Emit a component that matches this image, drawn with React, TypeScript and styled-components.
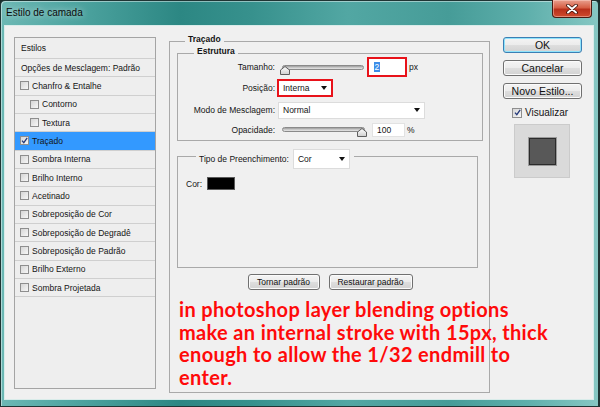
import React from "react";
import styled, { createGlobalStyle } from "styled-components";

const GlobalStyle = createGlobalStyle`
  html, body { margin: 0; padding: 0; }
  body {
    width: 600px;
    height: 407px;
    overflow: hidden;
    background: #1b2b2a;
    font-family: "Liberation Sans", Arial, sans-serif;
    color: #141414;
  }
  * { box-sizing: border-box; }
`;

const Window = styled.div`
  position: relative;
  width: 600px;
  height: 407px;
  display: flex;
  flex-direction: column;
  border: 1px solid #1f3534;
  border-right-width: 2px;
  border-radius: 5px 5px 0 0;
  background: linear-gradient(
    90deg,
    #6cb8b4 0%,
    #4fa5a1 12%,
    #2c8783 30%,
    #37918d 42%,
    #52a7a3 58%,
    #469c98 75%,
    #5eafab 88%,
    #86c7c3 100%
  );
  box-shadow: inset 1px 1px 0 rgba(255, 255, 255, 0.45);
  padding: 0 4px 6px 3px;
`;

const TitleBar = styled.div`
  height: 24px;
  display: flex;
  align-items: flex-start;
  justify-content: space-between;
`;

const Title = styled.div`
  font-size: 10px;
  line-height: 12px;
  padding: 6px 0 0 2px;
  color: #0b0b0b;
  text-shadow: 0 0 6px rgba(255, 255, 255, 0.7);
`;

const CloseButton = styled.div`
  width: 40px;
  height: 18px;
  margin: -1px 2px 0 0;
  border: 1px solid #4a1a12;
  border-top: none;
  border-radius: 0 0 4px 4px;
  background: linear-gradient(180deg, #e9a08e 0%, #d65f45 45%, #b8301b 55%, #cf4a2d 100%);
  box-shadow: inset 0 0 0 1px rgba(255, 220, 210, 0.45);
  display: flex;
  align-items: center;
  justify-content: center;
`;

const Content = styled.div`
  flex: 1;
  display: flex;
  align-items: flex-start;
  background: #f0f0f0;
  border: 1px solid #d9ecea;
  padding: 11px 11px 0 9px;
`;

/* ---------- left list ---------- */

const StyleList = styled.div`
  width: 142px;
  height: 352px;
  flex: none;
  display: flex;
  flex-direction: column;
  border: 1px solid #a4a4a4;
  background: #eeeeee;
`;

const ListRow = styled.div<{ $indent?: number; $active?: boolean; $tall?: boolean }>`
  height: ${(p) => (p.$tall ? "21px" : "18.33px")};
  flex: none;
  display: flex;
  align-items: center;
  gap: 3px;
  padding-left: ${(p) => p.$indent ?? 5}px;
  border-bottom: 1px solid #cfcfcf;
  background: ${(p) => (p.$active ? "#3399ff" : "transparent")};
  font-size: 8.5px;
  white-space: nowrap;
`;

const Box = styled.span<{ $size?: number }>`
  width: ${(p) => p.$size ?? 9}px;
  height: ${(p) => p.$size ?? 9}px;
  flex: none;
  border: 1px solid #8e8e8e;
  background: linear-gradient(135deg, #d6d6d6 0%, #f7f7f7 100%);
  display: inline-flex;
  align-items: center;
  justify-content: center;
`;

const Check = ({ checked, size }: { checked?: boolean; size?: number }) => (
  <Box $size={size}>
    {checked && (
      <svg width="7" height="7" viewBox="0 0 7 7">
        <path d="M1 3.6 L2.8 5.6 L6.2 0.8" fill="none" stroke="#253a7a" strokeWidth="1.3" />
      </svg>
    )}
  </Box>
);

/* ---------- group boxes ---------- */

const Group = styled.div<{ $w: number; $h: number; $mt?: number }>`
  position: relative;
  width: ${(p) => p.$w}px;
  height: ${(p) => p.$h}px;
  margin-top: ${(p) => p.$mt ?? 0}px;
  flex: none;
  border: 1px solid #a9a9a9;
  display: flex;
  flex-direction: column;
`;

const Caption = styled.div<{ $left: number }>`
  position: absolute;
  top: -8px;
  left: ${(p) => p.$left}px;
  padding: 0 3px;
  background: #f0f0f0;
  font-size: 8.5px;
  line-height: 10px;
  font-weight: bold;
  display: flex;
  align-items: center;
  gap: 4px;
`;

const WideCaption = styled(Caption)`
  font-weight: normal;
  height: 20px;
  padding: 0 4px 0 3px;
`;

const Stroke = styled(Group)`
  margin-top: 4px;
  margin-left: 13px;
  padding: 11px 6px 0 7px;
`;

const FieldRow = styled.div<{ $h: number; $mt: number }>`
  height: ${(p) => p.$h}px;
  margin-top: ${(p) => p.$mt}px;
  display: flex;
  align-items: center;
  font-size: 8.5px;
`;

const Label = styled.span<{ $gap: number }>`
  width: 97px;
  margin-right: ${(p) => p.$gap}px;
  text-align: right;
  white-space: nowrap;
  flex: none;
`;

const SliderTrack = styled.div<{ $w: number }>`
  position: relative;
  width: ${(p) => p.$w}px;
  height: 5px;
  flex: none;
  border: 1px solid #8a8a8a;
  border-radius: 3px;
  background: linear-gradient(180deg, #9c9c9c 0%, #cfcfcf 60%, #e4e4e4 100%);
`;

const Thumb = styled.svg<{ $atEnd?: boolean }>`
  position: absolute;
  top: 0px;
  ${(p) => (p.$atEnd ? "right: -3px;" : "left: -3px;")}
`;

const Slider = ({ w, atEnd }: { w: number; atEnd?: boolean }) => (
  <SliderTrack $w={w}>
    <Thumb $atEnd={atEnd} width="10" height="9" viewBox="0 0 10 9">
      <defs>
        <linearGradient id="tg" x1="0" y1="0" x2="0" y2="1">
          <stop offset="0" stopColor="#ffffff" />
          <stop offset="1" stopColor="#cfcfcf" />
        </linearGradient>
      </defs>
      <path d="M0.5 4 L5 0.5 L9.5 4 L9.5 8.5 L0.5 8.5 Z" fill="url(#tg)" stroke="#5e5e5e" strokeWidth="1" />
    </Thumb>
  </SliderTrack>
);

const RedFrame = styled.div<{ $w: number; $h: number; $ml: number }>`
  width: ${(p) => p.$w}px;
  height: ${(p) => p.$h}px;
  margin-left: ${(p) => p.$ml}px;
  flex: none;
  border: 2px solid #e8121a;
  background: #ffffff;
  display: flex;
  align-items: center;
`;

const NumberBox = styled.div<{ $w: number; $h: number; $ml: number }>`
  width: ${(p) => p.$w}px;
  height: ${(p) => p.$h}px;
  margin-left: ${(p) => p.$ml}px;
  flex: none;
  background: #ffffff;
  border: 1px solid #e2e2e2;
  display: flex;
  align-items: center;
  padding-left: 4px;
  font-size: 8.5px;
`;

const Selected = styled.span`
  background: #3d8ee8;
  color: #ffffff;
  margin-left: 5px;
  padding: 0 0.5px;
  line-height: 10px;
`;

const Unit = styled.span`
  margin-left: 2px;
`;

const Select = styled.div<{ $w: number; $h: number; $ml?: number; $bare?: boolean }>`
  width: ${(p) => p.$w}px;
  height: ${(p) => p.$h}px;
  margin-left: ${(p) => p.$ml ?? 0}px;
  flex: none;
  background: #ffffff;
  border: ${(p) => (p.$bare ? "none" : "1px solid #dcdcdc")};
  display: flex;
  align-items: center;
  justify-content: space-between;
  padding: 0 4px 0 4px;
  font-size: 8.5px;
  font-weight: normal;
`;

const Arrow = styled.span`
  width: 0;
  height: 0;
  border-left: 3.5px solid transparent;
  border-right: 3.5px solid transparent;
  border-top: 4px solid #111111;
`;

const ColorRow = styled.div`
  margin-top: 20px;
  padding-left: 8px;
  display: flex;
  align-items: center;
  gap: 5px;
  font-size: 8.5px;
`;

const Swatch = styled.div`
  width: 28px;
  height: 13px;
  background: #000000;
  border: 1px solid #5a5a5a;
`;

const ButtonRow = styled.div`
  margin-top: 6px;
  display: flex;
  justify-content: center;
  gap: 9px;
`;

const Button = styled.div<{ $w: number; $default?: boolean; $small?: boolean }>`
  width: ${(p) => p.$w}px;
  height: 16px;
  flex: none;
  display: flex;
  align-items: center;
  justify-content: center;
  font-size: ${(p) => (p.$small ? "8.5px" : "10.5px")};
  color: #111111;
  border: 1px solid ${(p) => (p.$default ? "#3a7fb4" : "#707070")};
  border-radius: 3px;
  background: linear-gradient(180deg, #f4f4f4 0%, #ececec 48%, #dedede 52%, #d2d2d2 100%);
  box-shadow: inset 0 0 0 1px ${(p) => (p.$default ? "#8fe3fb" : "#fbfbfb")};
  white-space: nowrap;
`;

/* ---------- right column ---------- */

const SideColumn = styled.div`
  width: 79px;
  margin-left: 13px;
  flex: none;
  display: flex;
  flex-direction: column;
  gap: 7px;
`;

const PreviewToggle = styled.div`
  margin-top: 1px;
  padding-left: 9px;
  display: flex;
  align-items: center;
  gap: 3px;
  font-size: 10px;
  height: 11px;
`;

const Preview = styled.div`
  width: 56px;
  height: 54px;
  margin: -1px 0 0 11px;
  background: #dadada;
  border: 1px solid #cbcbcb;
  display: flex;
  align-items: center;
  justify-content: center;
`;

const PreviewSquare = styled.div`
  width: 27px;
  height: 27px;
  background: #585858;
  border: 1px solid #2b2b2b;
  box-shadow: 0 0 0 1px #9a9a9a;
`;

/* ---------- annotation ---------- */

const Note = styled.div`
  position: absolute;
  left: 178px;
  top: 297px;
  color: #ff0a0a;
  font-family: Lato, "Open Sans", sans-serif;
  font-weight: 700;
  font-size: 20px;
  letter-spacing: 0.35px;
  line-height: 22.5px;
  white-space: nowrap;
`;

const NoteLine = styled.div``;

const listItems: { label: string; indent?: number; active?: boolean }[] = [
  { label: "Chanfro & Entalhe" },
  { label: "Contorno", indent: 15 },
  { label: "Textura", indent: 15 },
  { label: "Traçado", active: true },
  { label: "Sombra Interna" },
  { label: "Brilho Interno" },
  { label: "Acetinado" },
  { label: "Sobreposição de Cor" },
  { label: "Sobreposição de Degradê" },
  { label: "Sobreposição de Padrão" },
  { label: "Brilho Externo" },
  { label: "Sombra Projetada" },
];

export default function App() {
  return (
    <>
      <GlobalStyle />
      <Window>
        <TitleBar>
          <Title>Estilo de camada</Title>
          <CloseButton>
            <svg width="12" height="10" viewBox="0 0 12 10">
              <path d="M2 1.5 L10 8.5 M10 1.5 L2 8.5" stroke="#3a1008" strokeWidth="3.6" strokeLinecap="round" />
              <path d="M2 1.5 L10 8.5 M10 1.5 L2 8.5" stroke="#ffffff" strokeWidth="2" strokeLinecap="round" />
            </svg>
          </CloseButton>
        </TitleBar>
        <Content>
          <StyleList>
            <ListRow $tall $indent={6}>Estilos</ListRow>
            <ListRow $indent={6}>Opções de Mesclagem: Padrão</ListRow>
            {listItems.map((it) => (
              <ListRow key={it.label} $indent={it.indent} $active={it.active}>
                <Check checked={it.active} />
                {it.label}
              </ListRow>
            ))}
          </StyleList>

          <Stroke $w={321} $h={352}>
            <Caption $left={15}>Traçado</Caption>

            <Group $w={306} $h={88}>
              <Caption $left={16}>Estrutura</Caption>
              <FieldRow $h={20} $mt={3}>
                <Label $gap={7}>Tamanho:</Label>
                <Slider w={82} />
                <RedFrame $w={40} $h={20} $ml={3}>
                  <Selected>2</Selected>
                </RedFrame>
                <Unit>px</Unit>
              </FieldRow>
              <FieldRow $h={18} $mt={2}>
                <Label $gap={2}>Posição:</Label>
                <RedFrame $w={56} $h={18} $ml={0}>
                  <Select $w={52} $h={14} $bare>
                    Interna
                    <Arrow />
                  </Select>
                </RedFrame>
              </FieldRow>
              <FieldRow $h={16} $mt={5}>
                <Label $gap={3}>Modo de Mesclagem:</Label>
                <Select $w={147} $h={17}>
                  Normal
                  <Arrow />
                </Select>
              </FieldRow>
              <FieldRow $h={15} $mt={4}>
                <Label $gap={7}>Opacidade:</Label>
                <Slider w={83} atEnd />
                <NumberBox $w={33} $h={14} $ml={7}>
                  100
                </NumberBox>
                <Unit>%</Unit>
              </FieldRow>
            </Group>

            <Group $w={301} $h={112} $mt={15}>
              <WideCaption $left={18}>
                Tipo de Preenchimento:
                <Select $w={57} $h={20}>
                  Cor
                  <Arrow />
                </Select>
              </WideCaption>
              <ColorRow>
                Cor:
                <Swatch />
              </ColorRow>
            </Group>

            <ButtonRow>
              <Button $w={72} $small>
                Tornar padrão
              </Button>
              <Button $w={84} $small>
                Restaurar padrão
              </Button>
            </ButtonRow>
          </Stroke>

          <SideColumn>
            <Button $w={79} $default>
              OK
            </Button>
            <Button $w={79}>Cancelar</Button>
            <Button $w={79}>Novo Estilo...</Button>
            <PreviewToggle>
              <Check checked size={10} />
              Visualizar
            </PreviewToggle>
            <Preview>
              <PreviewSquare />
            </Preview>
          </SideColumn>
        </Content>

        <Note>
          <NoteLine>in photoshop layer blending options</NoteLine>
          <NoteLine>make an internal stroke with 15px, thick</NoteLine>
          <NoteLine>enough to allow the 1/32 endmill to</NoteLine>
          <NoteLine>enter.</NoteLine>
        </Note>
      </Window>
    </>
  );
}
